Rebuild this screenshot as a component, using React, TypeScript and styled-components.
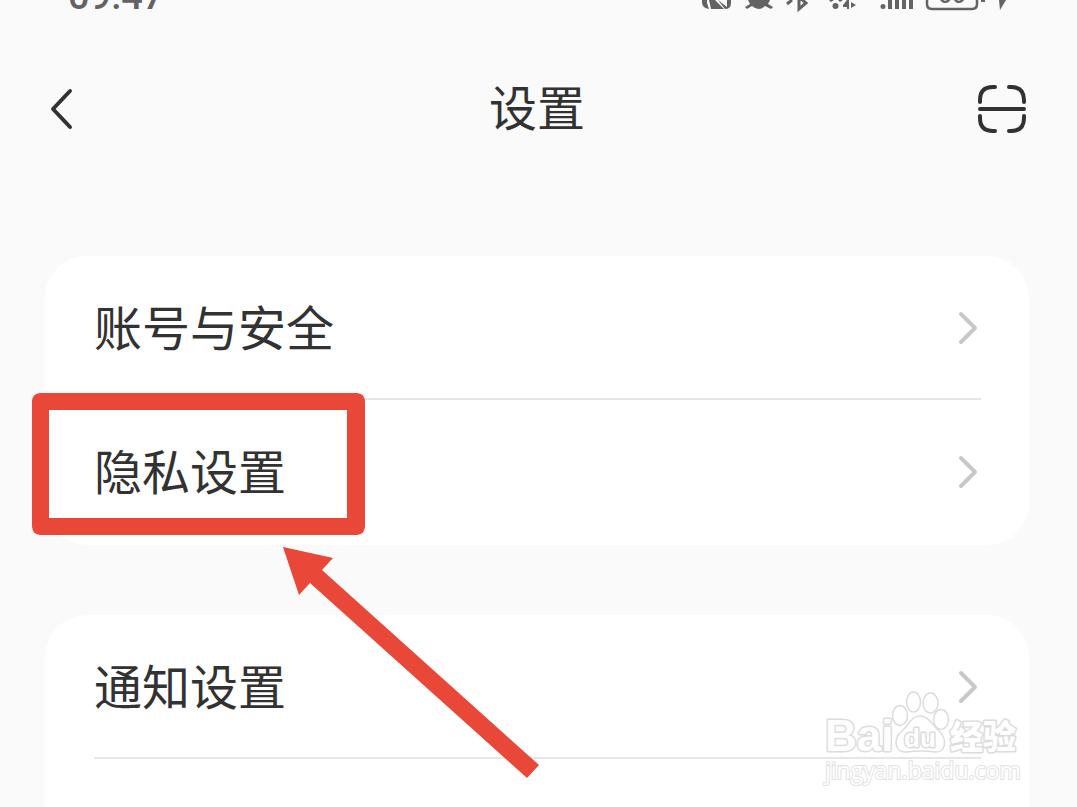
import React from "react";
import styled, { createGlobalStyle } from "styled-components";

const GlobalStyle = createGlobalStyle`
  *, *::before, *::after { box-sizing: border-box; }
  body {
    margin: 0;
    overflow: hidden;
    background: #fafafa;
    color: #323232;
    font-family: "Noto Sans CJK SC", sans-serif;
  }
`;

const Page = styled.div`
  position: relative;
  height: 100vh;
  overflow: hidden;
`;

const StatusBar = styled.div`
  display: flex;
  justify-content: space-between;
  align-items: flex-end;
  height: 16px;
  padding: 0 66px 0 68px;
  overflow: hidden;
  color: #636363;
`;

const Clock = styled.time`
  font: 500 38px/40px Roboto, sans-serif;
`;

const StatusIcons = styled.svg`
  display: block;
  width: 310px;
  height: 16px;
`;

const Header = styled.header`
  display: grid;
  grid-template-columns: 48px 1fr 48px;
  align-items: center;
  height: 186px;
  padding: 0 51px 0 48px;
`;

const IconButton = styled.button`
  display: flex;
  width: 48px;
  height: 48px;
  padding: 0;
  border: 0;
  background: none;
  color: inherit;
`;

const Title = styled.h1`
  margin: 0;
  padding-bottom: 8px;
  text-align: center;
  font-size: 48px;
  line-height: 72px;
  font-weight: 400;
`;

const Content = styled.main`
  display: flex;
  flex-direction: column;
  gap: 70px;
  padding: 54px 48px 0 45px;
`;

const Card = styled.nav`
  padding: 0 48px 1px 49px;
  border-radius: 42px;
  background: #fff;
`;

const Row = styled.a`
  display: flex;
  align-items: center;
  justify-content: space-between;
  height: 144px;
  padding-top: 2px;
  border-bottom: 2px solid #e6e6e6;
  color: inherit;
  text-decoration: none;

  &:last-child {
    padding-top: 0;
    border-bottom: 0;
  }
`;

const Label = styled.span`
  padding-bottom: 6px;
  font-size: 48px;
  line-height: 72px;
`;

const Chevron = styled.svg`
  width: 24px;
  height: 40px;
`;

const Highlight = styled.div`
  position: absolute;
  left: 32px;
  top: 393px;
  width: 333px;
  height: 142px;
  border-radius: 8px;
  background: #e94738;
  clip-path: path(evenodd, "M8 0H325Q333 0 333 8V134Q333 142 325 142H8Q0 142 0 134V8Q0 0 8 0ZM17 17V125H315V17Z");
`;

const Arrow = styled.svg`
  position: absolute;
  left: 280px;
  top: 544px;
  width: 262px;
  height: 236px;
`;

const Watermark = styled.div`
  position: absolute;
  top: 690px;
  right: 56px;
  width: 196px;
`;

const Logo = styled.svg`
  display: block;
  width: 196px;
  height: 66px;
  overflow: visible;

  text {
    paint-order: stroke;
    stroke-width: 3px;
    stroke-linejoin: round;
  }
`;

const Site = styled.div`
  color: #fff;
  font: 400 23px/28px "Open Sans", sans-serif;
  white-space: nowrap;
  -webkit-text-stroke: 2px #e2e2e2;
  paint-order: stroke;
`;

function Item({ label }: { label: string }) {
  return (
    <Row href="#">
      <Label>{label}</Label>
      <Chevron viewBox="0 0 24 40" fill="none" stroke="#c8c8c8" strokeWidth="4" strokeLinecap="round" strokeLinejoin="round">
        <path d="M4 6L18 20L4 34" />
      </Chevron>
    </Row>
  );
}

export default function App() {
  return (
    <>
      <GlobalStyle />
      <Page>
        <StatusBar>
          <Clock>09:47</Clock>
          <StatusIcons viewBox="701 0 310 16" fill="currentColor" aria-hidden="true">
            <path d="M702 0H707V3L709 9Q702 8 702 2ZM709 0H715L724 9H711ZM718 0L727 7V0H731V3Q731 9 725 9Z" />
            <path d="M748 0H770L768 4L773 7L771 9L765 6Q759 12 752 6L747 9L745 7L750 4Z" />
            <path d="M787 4L792 0M799 -2V9L806 3L800 -2" fill="none" stroke="currentColor" strokeWidth="3" />
            <circle cx="835.500" cy="6" r="3" />
            <path d="M829 0H834L831 2ZM838 0H843L840 2ZM849 0V9H847V7H843V5L847 0ZM851 2L856 5L851 8Z" />
            <circle cx="883" cy="6.500" r="2.500" />
            <path d="M888 0H892V9H888ZM895 0H899V9H895ZM902 0H906V9H902ZM909 0H913V9H909Z" />
            <path d="M927 0V4Q927 9 932 9H972Q977 9 977 4V0" fill="none" stroke="currentColor" strokeWidth="2.500" />
            <path d="M981 0H985V2H981ZM999 0H1006L1000 10Z" />
            <text x="938" y="3" fontFamily="Roboto" fontWeight="500" fontSize="24">66</text>
          </StatusIcons>
        </StatusBar>

        <Header>
          <IconButton aria-label="返回">
            <svg width="48" height="48" viewBox="0 0 48 48" fill="none" stroke="currentColor" strokeWidth="4" strokeLinecap="round" strokeLinejoin="round">
              <path d="M22 6L5 24L22 42" />
            </svg>
          </IconButton>
          <Title>设置</Title>
          <IconButton aria-label="扫一扫">
            <svg width="48" height="48" viewBox="0 0 48 48" fill="none" stroke="currentColor" strokeWidth="4" strokeLinecap="round">
              <path d="M17 2H15Q2 2 2 15V17M31 2H33Q46 2 46 15V17M2 31V33Q2 46 15 46H17M46 31V33Q46 46 33 46H31M2 24H46" />
            </svg>
          </IconButton>
        </Header>

        <Content>
          <Card>
            <Item label="账号与安全" />
            <Item label="隐私设置" />
          </Card>
          <Card>
            <Item label="通知设置" />
            <Row as="div" />
          </Card>
        </Content>

        <Highlight />
        <Arrow viewBox="280 544 262 236" fill="#e94738">
          <path d="M283 547L333 558L322 570L539 765L527 778L310 583L299 595Z" />
        </Arrow>

        <Watermark>
          <Logo viewBox="825 690 196 66" fill="#fff" stroke="#dcdcdc" strokeWidth="1.500">
            <text x="825" y="751" fontFamily="Liberation Sans" fontWeight="700" fontSize="44">Bai</text>
            <ellipse cx="900" cy="715.500" rx="7.500" ry="10" />
            <ellipse cx="913.500" cy="702" rx="7" ry="10" />
            <ellipse cx="930.500" cy="703" rx="7.500" ry="10" />
            <ellipse cx="941" cy="719.500" rx="7.500" ry="10" />
            <path d="M920 716C929 716 932 725 938 730C949 740 945 753 935 752Q920 750 907 752C894 753 893 738 902 731C909 725 911 716 920 716Z" />
            <text x="904" y="747" fontFamily="Liberation Sans" fontWeight="700" fontSize="26">du</text>
            <text x="950" y="749" fontFamily="Noto Sans CJK SC" fontWeight="900" fontSize="33">经验</text>
          </Logo>
          <Site>jingyan.baidu.com</Site>
        </Watermark>
      </Page>
    </>
  );
}
